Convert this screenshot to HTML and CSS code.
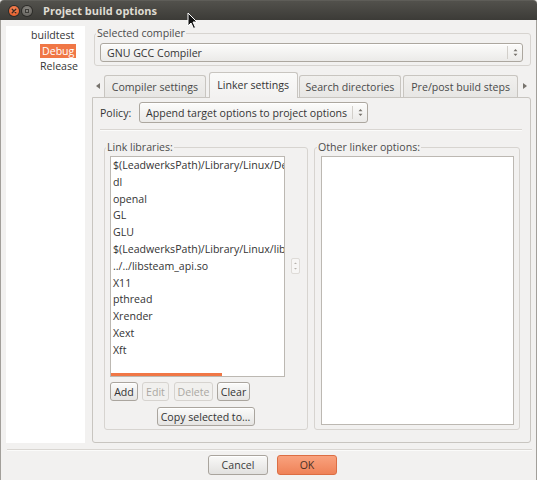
FILE: index.html
```html
<!DOCTYPE html>
<html>
<head>
<meta charset="utf-8">
<link rel="stylesheet" href="styles.css">
</head>
<body>
<div class="window">
  <div class="titlebar">
    <span class="wbtn close"><svg width="10" height="10" viewBox="0 0 10 10"><path d="M3.2 3.2 L6.8 6.8 M6.8 3.2 L3.2 6.8" stroke="#3a2a22" stroke-width="1.3" stroke-linecap="round"/></svg></span>
    <span class="wbtn mini"><span class="mini-sq"></span></span>
    <span class="title">Project build options</span>
  </div>
  <div class="frame">
    <div class="content">
      <div class="tree">
        <div class="node root">buildtest</div>
        <div class="node child"><span class="sel">Debug</span></div>
        <div class="node child">Release</div>
      </div>
      <div class="right">
        <fieldset class="group compiler">
          <legend>Selected compiler</legend>
          <div class="combo wide"><span class="combo-text">GNU GCC Compiler</span><span class="combo-arrows"><svg width="5" height="9" viewBox="0 0 5 9"><path d="M0.5 3.2 L2.5 1 L4.5 3.2Z M0.5 5.8 L2.5 8 L4.5 5.8Z" fill="#77736d"/></svg></span></div>
        </fieldset>
        <div class="tabs">
          <span class="tab-arrow"><svg width="4" height="6" viewBox="0 0 4 6"><path d="M4 0 L0 3 L4 6Z" fill="#77736d"/></svg></span>
          <div class="tab t1">Compiler settings</div>
          <div class="tab active t2">Linker settings</div>
          <div class="tab t3">Search directories</div>
          <div class="tab t4">Pre/post build steps</div>
          <span class="tab-arrow r"><svg width="4" height="6" viewBox="0 0 4 6"><path d="M0 0 L4 3 L0 6Z" fill="#77736d"/></svg></span>
        </div>
        <div class="panel">
          <div class="policy">
            <span class="policy-label">Policy:</span>
            <div class="combo policy-combo"><span class="combo-text">Append target options to project options</span><span class="combo-arrows"><svg width="5" height="9" viewBox="0 0 5 9"><path d="M0.5 3.2 L2.5 1 L4.5 3.2Z M0.5 5.8 L2.5 8 L4.5 5.8Z" fill="#77736d"/></svg></span></div>
          </div>
          <div class="hsep"></div>
          <div class="frames">
            <fieldset class="group libs">
              <legend>Link libraries:</legend>
              <div class="list-row">
                <div class="list">
                  <div class="item">$(LeadwerksPath)/Library/Linux/Debug/Leadwerks.a</div>
                  <div class="item">dl</div>
                  <div class="item">openal</div>
                  <div class="item">GL</div>
                  <div class="item">GLU</div>
                  <div class="item">$(LeadwerksPath)/Library/Linux/libs/libluajit.a</div>
                  <div class="item">../../libsteam_api.so</div>
                  <div class="item">X11</div>
                  <div class="item">pthread</div>
                  <div class="item">Xrender</div>
                  <div class="item">Xext</div>
                  <div class="item">Xft</div>
                  <div class="hbar"></div>
                </div>
                <div class="vhint"><svg width="7" height="14" viewBox="0 0 7 14"><path d="M2 5 L3.5 3.5 L5 5Z M2 9 L3.5 10.5 L5 9Z" fill="#b5b1ab"/></svg></div>
              </div>
              <div class="btn-row">
                <button class="btn b-add">Add</button>
                <button class="btn dis b-edit">Edit</button>
                <button class="btn dis b-del">Delete</button>
                <button class="btn b-clear">Clear</button>
              </div>
              <div class="copy-row">
                <button class="btn b-copy">Copy selected to...</button>
              </div>
            </fieldset>
            <fieldset class="group other">
              <legend>Other linker options:</legend>
              <div class="textarea"></div>
            </fieldset>
          </div>
        </div>
      </div>
    </div>
    <div class="footer-sep"></div>
    <div class="footer">
      <button class="dbtn cancel">Cancel</button>
      <button class="dbtn ok">OK</button>
    </div>
  </div>
  <svg class="cursor" width="12" height="18" viewBox="0 0 12 18"><path d="M1 1 L1 14 L4 11 L6.5 16.5 L8.5 15.5 L6 10 L10 10 Z" fill="#111" stroke="#fff" stroke-width="1" stroke-linejoin="round"/></svg>
</div>
</body>
</html>
```
FILE: styles.css
```css
* { box-sizing: border-box; }
html, body { margin: 0; padding: 0; }
body {
  width: 537px; height: 480px; overflow: hidden;
  font-family: "Open Sans", "Liberation Sans", sans-serif;
  font-size: 10.6px; color: #353535; background: #e9e8e6;
}
.window {
  width: 537px; height: 480px; display: flex; flex-direction: column;
  position: relative;
}
.titlebar {
  height: 20px; flex: none; display: flex; align-items: center;
  padding-left: 9px;
  background: linear-gradient(#52514c, #3c3b37);
  border-radius: 4px 4px 0 0;
  border-top: 1px solid #5e5d58;
}
.wbtn {
  width: 10px; height: 10px; border-radius: 50%;
  display: flex; align-items: center; justify-content: center;
}
.close {
  background: radial-gradient(circle at 50% 35%, #f78a5c, #e0501c);
  box-shadow: 0 0 0 1px #2c2b28;
}
.mini {
  margin-left: 3px;
  background: radial-gradient(circle at 50% 35%, #8a8883, #5e5c57);
  box-shadow: 0 0 0 1px #2c2b28;
}
.mini-sq { width: 4px; height: 4px; border: 1px solid #3c3b37; }
.title {
  margin-left: 11px; color: #dfdbd2; font-weight: bold; font-size: 11px;
}
.frame {
  flex: 1; display: flex; flex-direction: column;
  background: #f2f1f0;
  border: 1px solid #a29f9a; border-top: none;
}
.content {
  flex: 1; display: flex; padding: 6px 5px 0 5px; gap: 7px; min-height: 0;
}
.tree {
  width: 79px; flex: none; background: #fff; padding-top: 1.5px;
}
.node { height: 15.8px; line-height: 15.8px; white-space: nowrap; }
.root { padding-left: 25px; }
.child { padding-left: 34px; }
.sel {
  display: inline-block; background: #f07746; color: #fff;
  padding: 0 2px; line-height: 14px; margin-top: 1px;
}
.right { flex: 1; display: flex; flex-direction: column; min-width: 0; }
.group {
  margin: 0; border: 1px solid #d7d4d0; border-radius: 3px;
  min-width: 0;
}
.group legend {
  padding: 0 1px; margin-left: -4px; line-height: 14px; color: #4c4c4c;
}
.compiler { margin: 0 0 0 2px; padding: 3px 7px 3px 5px; }
.combo {
  height: 19px; display: flex; align-items: center;
  border: 1px solid #aca79f; border-radius: 3px;
  background: linear-gradient(#fcfcfb, #ebeae8);
  box-shadow: inset 0 1px 0 #fff;
}
.combo-text { flex: 1; padding-left: 6px; white-space: nowrap; }
.combo-arrows {
  width: 15px; height: 13px; border-left: 1px solid #d2cfca;
  display: flex; align-items: center; justify-content: center;
}
.tabs {
  margin-top: 6px; height: 25px; display: flex; align-items: flex-end;
  position: relative; z-index: 1;
}
.tab-arrow {
  width: 12px; height: 22px; display: flex; align-items: center; justify-content: center;
}
.tab-arrow.r { width: 12px; margin-left: 1px; }
.tab {
  height: 22px; border: 1px solid #c8c5c0; border-bottom: none;
  border-radius: 3px 3px 0 0; display: flex; align-items: center; justify-content: center;
  background: linear-gradient(#f1f0ee, #e7e6e4); color: #4a4a4a; white-space: nowrap;
}
.tab.active {
  height: 26px; background: linear-gradient(#fafaf9, #f2f1f0); color: #333;
  margin-bottom: -1px; padding-bottom: 1px;
}
.t1 { width: 102px; margin-right: 3px; }
.t2 { width: 89px; }
.t3 { width: 103px; margin-left: 1px; }
.t4 { width: 115px; margin-left: 2px; }
.panel {
  flex: 1; border: 1px solid #c8c5c0; border-radius: 0 3px 3px 3px;
  padding: 4px 8px 12px 7px; display: flex; flex-direction: column; min-height: 0;
}
.policy { display: flex; align-items: center; height: 21px; }
.policy-label { width: 39px; }
.policy-combo { width: 229px; height: 21px; }
.policy-combo .combo-text { padding-left: 6px; }
.hsep {
  margin-top: 6px; height: 2px; border-top: 1px solid #d9d6d2; border-bottom: 1px solid #fbfbfa;
}
.frames {
  flex: 1; display: flex; gap: 6px; margin: 9px 2px 0 4px; min-height: 0;
}
.libs {
  width: 204px; flex: none; padding: 2px 6px 3px 5px;
  display: flex; flex-direction: column;
}
.list-row { display: flex; align-items: center; }
.list {
  width: 175px; height: 221px; flex: none; background: #fff;
  border: 1px solid #bcb8b2; overflow: hidden; position: relative;
}
.item {
  height: 16.8px; line-height: 16.8px; padding-left: 2px; white-space: nowrap; color: #333;
}
.hbar {
  position: absolute; left: 0; bottom: 0; width: 111px; height: 3px; background: #f07746;
}
.vhint {
  margin-left: 6px; width: 9px; height: 16px; margin-top: -2px;
  border: 1px solid #dedbd7; border-radius: 2px; background: #f7f6f5;
  display: flex; align-items: center; justify-content: center;
}
.btn-row { display: flex; margin-top: 5px; }
.btn {
  height: 19px; font: inherit; color: #333; padding: 0;
  border: 1px solid #aaa59e; border-radius: 3px;
  background: linear-gradient(#fbfbfa, #e5e4e2);
  box-shadow: inset 0 1px 0 #fff;
}
.btn.dis { color: #aba8a3; border-color: #d6d3cf; background: #f1f0ee; box-shadow: none; }
.b-add { width: 28px; }
.b-edit { width: 27px; margin-left: 4px; }
.b-del { width: 39px; margin-left: 5px; }
.b-clear { width: 33px; margin-left: 4px; }
.copy-row { display: flex; justify-content: center; margin-top: 6px; padding-left: 0; }
.b-copy { width: 98px; }
.other {
  flex: 1; padding: 2px 5px 4px 6px; display: flex; flex-direction: column;
}
.textarea { flex: 1; background: #fff; border: 1px solid #bcb8b2; }
.footer-sep {
  margin: 6px 4px 0 6px; height: 2px; border-top: 1px solid #d9d6d2; border-bottom: 1px solid #fbfbfa;
}
.footer {
  display: flex; justify-content: center; gap: 9px; margin-top: 4px; padding: 0 0 6px 8px;
}
.dbtn {
  width: 60px; height: 20px; font: inherit; color: #3c3c3c; padding: 0;
  border-radius: 3px;
}
.cancel {
  border: 1px solid #a9a49d; background: linear-gradient(#f9f9f8, #e2e1df);
  box-shadow: inset 0 1px 0 #fff;
}
.ok {
  border: 1px solid #dc6e44; background: linear-gradient(#f9a27e, #ef8258);
  color: #4a3026;
}
.cursor { position: absolute; left: 187px; top: 12px; }
```
